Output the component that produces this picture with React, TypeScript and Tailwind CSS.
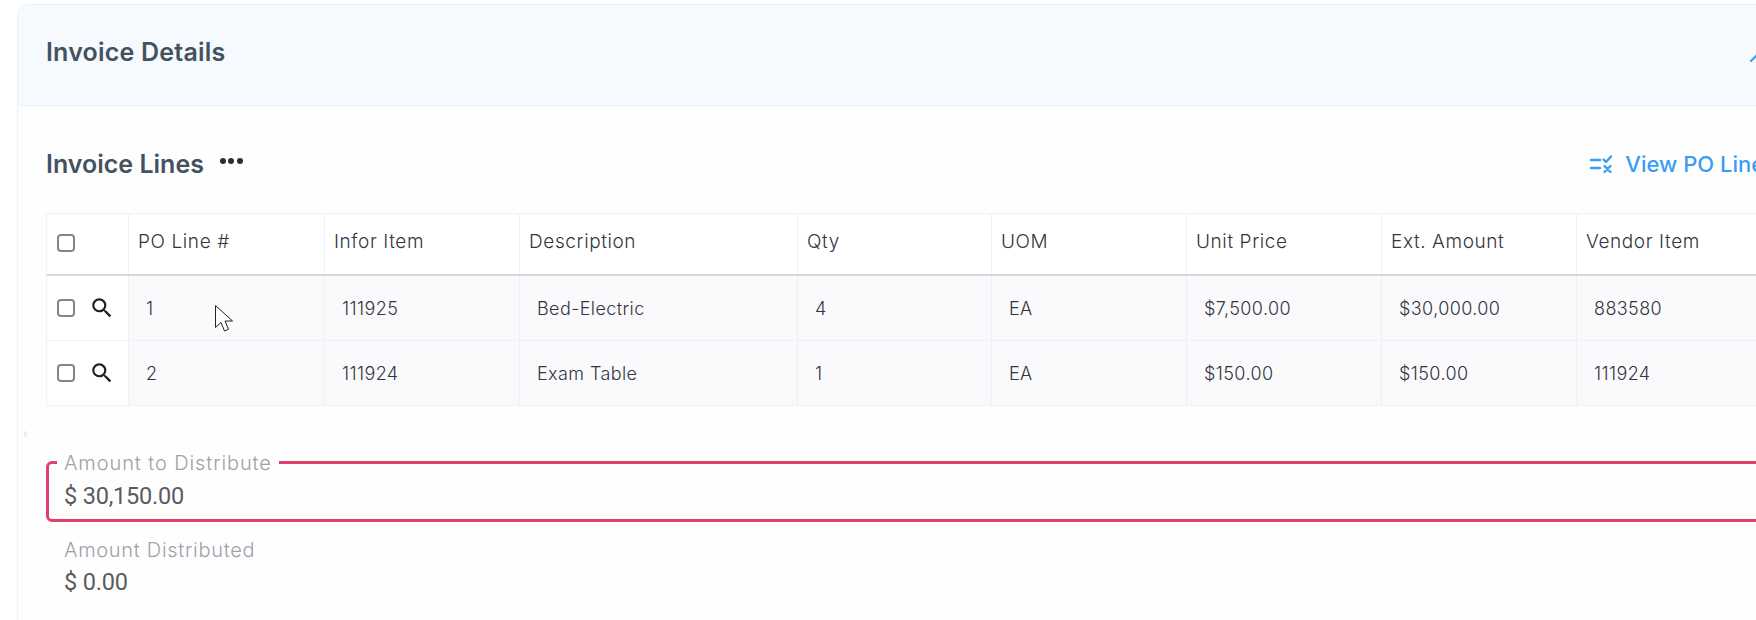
const columns = [
  { label: "PO Line #", width: "w-[196px]" },
  { label: "Infor Item", width: "w-[195px]" },
  { label: "Description", width: "w-[278px]" },
  { label: "Qty", width: "w-[194px]" },
  { label: "UOM", width: "w-[195px]" },
  { label: "Unit Price", width: "w-[195px]" },
  { label: "Ext. Amount", width: "w-[195px]" },
  { label: "Vendor Item", width: "w-[195px]" },
];

const rows = [
  ["1", "111925", "Bed-Electric", "4", "EA", "$7,500.00", "$30,000.00", "883580"],
  ["2", "111924", "Exam Table", "1", "EA", "$150.00", "$150.00", "111924"],
];

function Checkbox() {
  return <span className="block h-[18px] w-[18px] rounded-[4px] border-2 border-[#85858a] bg-white" />;
}

function SearchIcon() {
  return (
    <svg width="26" height="26" viewBox="0 0 24 24" fill="#1c1f24">
      <path d="M15.500 14h-.79l-.28-.27A6.471 6.471 0 0 0 16 9.500 6.500 6.500 0 1 0 9.500 16c1.610 0 3.090-.59 4.230-1.570l.27.28v.79l5 4.990L20.490 19l-4.990-5zm-6 0C7.010 14 5 11.990 5 9.500S7.010 5 9.500 5 14 7.010 14 9.500 11.990 14 9.500 14z" />
    </svg>
  );
}

function ListCheckIcon() {
  return (
    <svg width="24" height="20" viewBox="0 0 24 20" fill="none" stroke="#3b9cf5" strokeWidth="2.4" strokeLinecap="round" strokeLinejoin="round">
      <path d="M2 6h9M2 14h9" />
      <path d="M14.500 5.500l2.500 2.500 5-5.500" />
      <path d="M15.500 12l6 6M21.500 12l-6 6" />
    </svg>
  );
}

function CursorIcon() {
  return (
    <svg className="absolute left-[214px] top-[304px]" width="20" height="30" viewBox="0 0 20 30" fill="#fff" stroke="#222" strokeWidth="1">
      <path d="M1.500 1.500v22l5.500-5 3.500 8.500 4-1.800-3.500-8.200h7.500z" />
    </svg>
  );
}

export default function App() {
  return (
    <div className="relative h-[620px] w-[1756px] overflow-hidden bg-white font-['Inter',sans-serif]">
      <div className="ml-[17px] mt-[4px] h-[640px] w-[1800px] rounded-tl-xl border-l border-t border-[#eef0f3] bg-[#fefefe]">
        <div className="flex h-[101px] items-center justify-between rounded-tl-xl border-b border-[#eef0f3] bg-[#f6f9fe] pl-[28px] pr-[48px]">
          <h2 className="pb-[4px] text-[25px] font-semibold tracking-[0.2px] text-[#44525f]">Invoice Details</h2>
          <svg className="mt-[6px]" width="24" height="24" viewBox="0 0 24 24" fill="none" stroke="#3b9cf5" strokeWidth="2" strokeLinecap="round" strokeLinejoin="round">
            <path d="M6 15l6-6 6 6" />
          </svg>
        </div>

        <div className="pl-[28px]">
          <div className="mt-[40px] flex h-[38px] w-[1730px] items-center justify-between">
            <div className="flex items-center gap-[16px]">
              <h3 className="text-[25px] font-semibold text-[#44525f]">Invoice Lines</h3>
              <span className="-mt-[8px] flex gap-[2.500px]">
                <i className="h-[6px] w-[6px] rounded-full bg-[#2b2f36]" />
                <i className="h-[6px] w-[6px] rounded-full bg-[#2b2f36]" />
                <i className="h-[6px] w-[6px] rounded-full bg-[#2b2f36]" />
              </span>
            </div>
            <div className="flex items-center gap-[12px] pb-[2px] text-[22px] font-medium whitespace-nowrap text-[#3b9cf5]">
              <ListCheckIcon />
              <span>View PO Lines</span>
            </div>
          </div>

          <div className="mt-[29px] w-[1800px] border-l border-t border-[#eef0f3] text-[#33363d]">
            <div className="flex h-[62px] border-b-2 border-[#d5d7da] bg-white text-[19px] font-light tracking-[0.6px]">
              <div className="flex w-[82px] shrink-0 items-center border-r border-[#eef0f3] pb-[3px] pl-[10px]">
                <Checkbox />
              </div>
              {columns.map((c) => (
                <div key={c.label} className={`${c.width} flex shrink-0 items-center border-r border-[#eef0f3] pb-[3px] pl-[9px]`}>
                  {c.label}
                </div>
              ))}
            </div>
            {rows.map((r) => (
              <div key={r[0]} className="flex h-[65px] border-b border-[#eef0f3] text-[18px] font-light tracking-[0.4px]">
                <div className="flex w-[82px] shrink-0 items-center gap-[14px] border-r border-[#eef0f3] bg-white pl-[10px]">
                  <Checkbox />
                  <SearchIcon />
                </div>
                {r.map((v, i) => (
                  <div key={i} className={`${columns[i].width} flex shrink-0 items-center border-r border-[#eef0f3] bg-[#fafafd] pl-[17px] pt-[1px]`}>
                    {v}
                  </div>
                ))}
              </div>
            ))}
          </div>

          <fieldset className="mt-[45px] h-[71px] w-[1800px] rounded-[6px] border-[3px] border-[#e0406a] pl-[8px]">
            <legend className="px-[7px] pt-[2px] text-[20px] font-light leading-[20px] tracking-[0.9px] text-[#a0a1a9]">Amount to Distribute</legend>
            <div className="pl-[7px] pt-[8px] font-['Roboto',sans-serif] text-[23.500px] leading-[30px] tracking-[-0.2px] text-[#5a5b61]">$ 30,150.00</div>
          </fieldset>

          <div className="mt-[14px] pl-[18px]">
            <div className="text-[20px] font-light leading-[28px] tracking-[0.7px] text-[#a0a1a9]">Amount Distributed</div>
            <div className="mt-[3px] font-['Roboto',sans-serif] text-[23.500px] leading-[30px] tracking-[-0.2px] text-[#5a5b61]">$ 0.00</div>
          </div>
        </div>
      </div>
      <span className="absolute left-[24px] top-[431px] h-[6px] w-[3px] rounded-full bg-[#eceef2]" />
      <CursorIcon />
    </div>
  );
}
